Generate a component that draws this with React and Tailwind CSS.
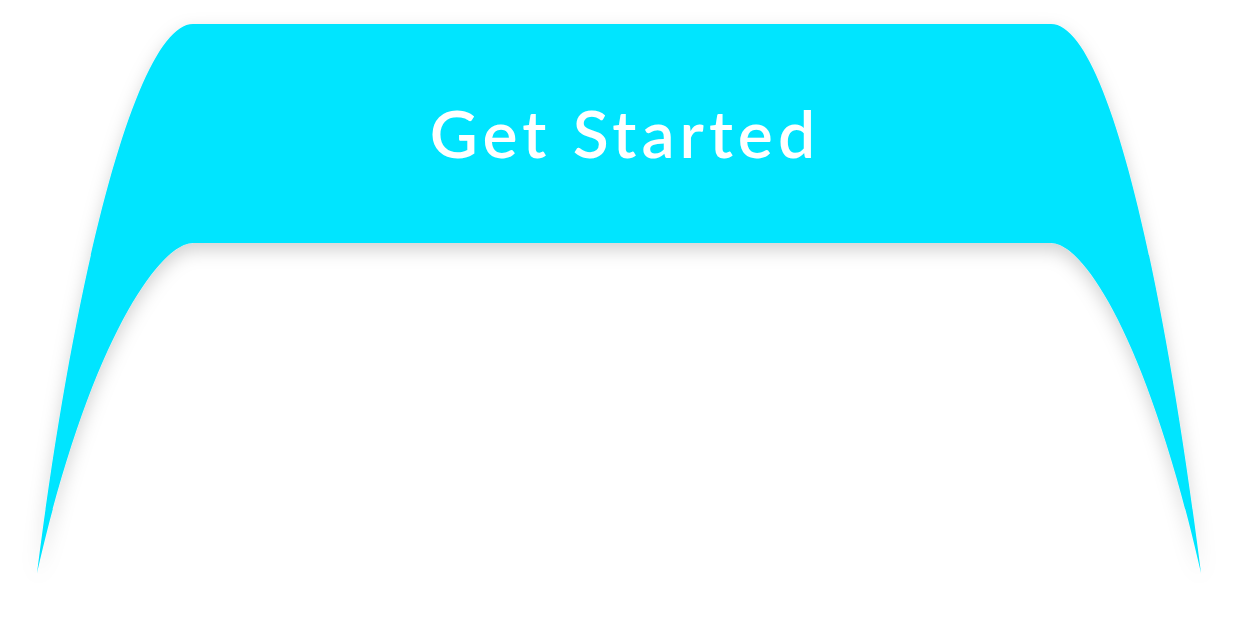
import React from "react";

export default function App() {
  return (
    <div className="relative w-[1238px] h-[622px] bg-white overflow-hidden">
      <svg
        className="absolute inset-0"
        width="1238"
        height="622"
        viewBox="0 0 1238 622"
        aria-hidden="true"
      >
        <defs>
          <filter id="sh" x="-10%" y="-10%" width="120%" height="130%">
            <feDropShadow dx="0" dy="7" stdDeviation="9" floodColor="#000" floodOpacity="0.18" />
          </filter>
        </defs>
        <path
          filter="url(#sh)"
          fill="#00E5FF"
          d="M 37 573 C 78 250, 140 24, 193 24 L 1051 24 C 1104 24, 1160 250, 1201 573 C 1148 340, 1084 243, 1051 243 L 193 243 C 160 243, 90 340, 37 573 Z"
        />
      </svg>
      <div className="relative flex flex-col">
        <button className="mt-[24px] mx-[193px] h-[219px] flex items-center justify-center pb-[2px] pl-[12px] text-white text-[66px] leading-none font-semibold tracking-[5px] font-['Lato','Noto_Sans',sans-serif] cursor-pointer">
          Get Started
        </button>
      </div>
    </div>
  );
}
